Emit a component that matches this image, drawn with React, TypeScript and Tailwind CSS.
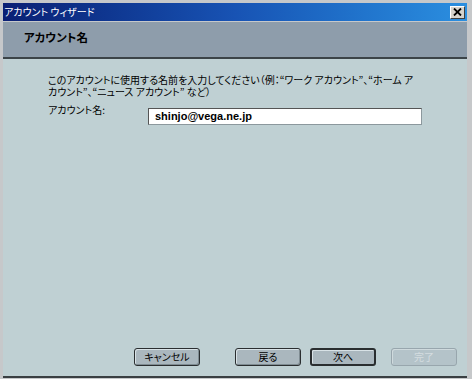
import React from "react";

const jp = "font-['MS_UI_Gothic','Noto_Sans_CJK_JP',sans-serif] [font-feature-settings:'palt']";

function Btn({ label, variant }: { label: string; variant?: "default" | "disabled" }) {
  const base =
    "w-[66px] h-[18px] flex items-center justify-center rounded-[3px] text-[10px] leading-none " + jp;
  if (variant === "default")
    return (
      <div className={base + " border-2 border-[#2a2e30] bg-[#aab7be] text-black shadow-[inset_1px_1px_0_#d8e2e6]"}>
        {label}
      </div>
    );
  if (variant === "disabled")
    return (
      <div className={base + " border border-[#98a6ad] bg-[#b4c3c9] text-[#d4dde0] shadow-[inset_1px_1px_0_#cfdadd]"}>
        {label}
      </div>
    );
  return (
    <div className={base + " border border-[#2a2e30] bg-[#aab7be] text-black shadow-[inset_1px_1px_0_#d8e2e6,inset_-1px_-1px_0_#7f8c92]"}>
      {label}
    </div>
  );
}

export default function App() {
  return (
    <div className="w-[472px] h-[379px] bg-[#c6c8ca] pt-[3px] pl-[3px] pr-[5px] pb-[1px] flex flex-col">
      {/* title bar */}
      <div className="h-[18px] flex items-center justify-between bg-gradient-to-r from-[#0a1f74] via-[#1853b4] to-[#2b8fe0] pl-[1px] pr-[2px]">
        <span className={"text-white text-[10px] leading-none " + jp}>アカウント ウィザード</span>
        <div className="w-[15px] h-[13px] bg-[#d6d3cc] border border-t-white border-l-white border-r-[#404040] border-b-[#404040] flex items-center justify-center">
          <svg width="9" height="8" viewBox="0 0 9 8">
            <path d="M1 0.5 L8 7.5 M8 0.5 L1 7.5" stroke="#000" strokeWidth="1.8" />
          </svg>
        </div>
      </div>
      {/* header */}
      <div className="h-[37px] mt-[1px] bg-[#8e9dab] border-b-2 border-[#3c4448] pl-[21px] pt-[10px] flex items-start">
        <span className={"text-[11.5px] font-bold text-black leading-none " + jp}>アカウント名</span>
      </div>
      {/* content */}
      <div className="flex-1 bg-[#bfd0d3] border-b-2 border-[#3a3f42] flex flex-col">
        <div className="pl-[45px] pt-[15px]">
          <p className={"text-[10px] leading-[12px] text-black whitespace-nowrap " + jp}>
            このアカウントに使用する名前を入力してください（例：“ワーク アカウント”、“ホーム ア
            <br />
            カウント”、“ニュース アカウント” など）
          </p>
          <div className="flex items-start mt-[6px]">
            <span className={"w-[100px] text-[10px] leading-[12px] text-black " + jp}>アカウント名:</span>
            <div className="mt-[4px] w-[274px] h-[17px] bg-white border border-t-[#555] border-l-[#555] border-r-[#8c989d] border-b-[#8c989d] flex items-center pl-[6px]">
              <span className="font-['Liberation_Sans',Arial,sans-serif] font-bold text-[11px] leading-none text-black">
                shinjo@vega.ne.jp
              </span>
            </div>
          </div>
        </div>
        <div className="flex-1" />
        <div className="flex justify-end pr-[10px] pb-[10px]">
          <Btn label="キャンセル" />
          <div className="w-[35px]" />
          <Btn label="戻る" />
          <div className="w-[9px]" />
          <Btn label="次へ" variant="default" />
          <div className="w-[15px]" />
          <Btn label="完了" variant="disabled" />
        </div>
      </div>
    </div>
  );
}
